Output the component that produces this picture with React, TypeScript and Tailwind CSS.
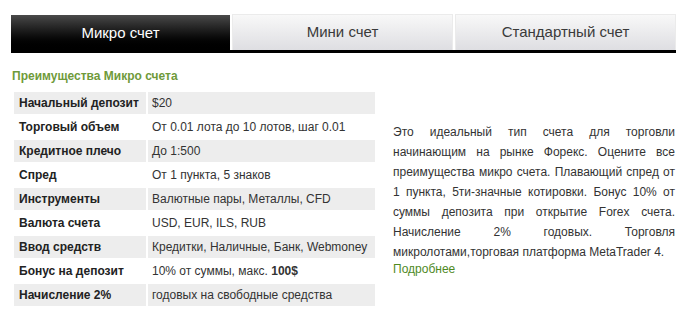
const rows: { label: string; value: React.ReactNode }[] = [
  { label: 'Начальный депозит', value: '$20' },
  { label: 'Торговый объем', value: 'От 0.01 лота до 10 лотов, шаг 0.01' },
  { label: 'Кредитное плечо', value: 'До 1:500' },
  { label: 'Спред', value: 'От 1 пункта, 5 знаков' },
  { label: 'Инструменты', value: 'Валютные пары, Металлы, CFD' },
  { label: 'Валюта счета', value: 'USD, EUR, ILS, RUB' },
  { label: 'Ввод средств', value: 'Кредитки, Наличные, Банк, Webmoney' },
  {
    label: 'Бонус на депозит',
    value: (
      <>
        10% от суммы, макс. <b>100$</b>
      </>
    ),
  },
  { label: 'Начисление 2%', value: 'годовых на свободные средства' },
]

const tabs = ['Микро счет', 'Мини счет', 'Стандартный счет']

export default function App() {
  const active = 0

  return (
    <div className="min-h-[332px] w-[694px] bg-white font-['Liberation_Sans',Arial,sans-serif] text-[12px] text-[#333]">
      <div className="ml-[11px] w-[665px] pt-[14px]">
        <div className="flex items-end gap-[2px] border-b-[3px] border-black">
          {tabs.map((t, i) =>
            i === active ? (
              <div
                key={t}
                className="flex h-[35px] flex-1 items-center justify-center bg-gradient-to-b from-[#4a4a4a] to-black pt-[1px] text-[15px] text-white"
              >
                {t}
              </div>
            ) : (
              <div
                key={t}
                className="flex h-[36px] flex-1 items-center justify-center border border-b-0 border-[#ebebeb] bg-gradient-to-b from-[#f8f8f8] to-[#dedee2] text-[15px] text-[#3a3a3a]"
              >
                {t}
              </div>
            ),
          )}
        </div>
      </div>

      <h3 className="ml-[12px] mt-[16px] text-[12px] font-bold leading-[14px] text-[#6f9a3a]">
        Преимущества Микро счета
      </h3>

      <div className="mt-[7px] flex items-center">
        <table className="ml-[12px] w-[365px] border-separate border-spacing-[2px]">
          <tbody>
            {rows.map((r, i) => (
              <tr key={r.label} className={i % 2 === 0 ? 'bg-[#ededed]' : 'bg-white'}>
                <td className="h-[22px] w-[132px] px-[5px] py-0 font-bold text-[#222]">{r.label}</td>
                <td className="h-[22px] px-[4px] py-0 text-[#333]">{r.value}</td>
              </tr>
            ))}
          </tbody>
        </table>

        <div className="ml-[16px] w-[282px]">
          <p className="text-justify leading-[20px] text-[#333]">
            Это идеальный тип счета для торговли начинающим на рынке Форекс. Оцените все
            преимущества микро счета. Плавающий спред от 1 пункта, 5ти-значные котировки. Бонус
            10% от суммы депозита при открытие Forex счета. Начисление 2% годовых. Торговля
            микролотами,торговая платформа MetaTrader 4.
          </p>
          <a href="#" className="block leading-[14px] text-[#4f8a1f]">
            Подробнее
          </a>
        </div>
      </div>
    </div>
  )
}
